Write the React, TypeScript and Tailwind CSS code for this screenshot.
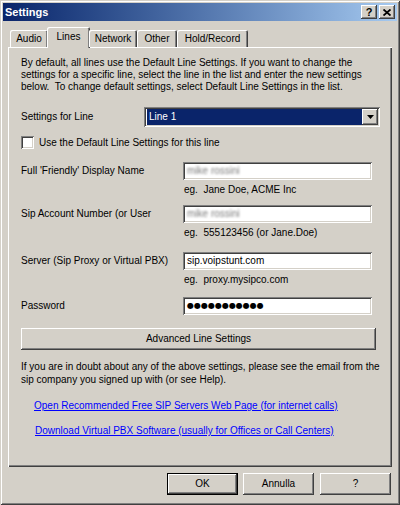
import React from "react";

const sunken =
  "bg-white shadow-[inset_1px_1px_#808080,inset_-1px_-1px_#ffffff,inset_2px_2px_#404040,inset_-2px_-2px_#d4d0c8]";
const raised =
  "bg-[#d4d0c8] shadow-[inset_-1px_-1px_#404040,inset_1px_1px_#ffffff,inset_-2px_-2px_#808080,inset_2px_2px_#d4d0c8]";

function Field({ children, className = "" }: { children: React.ReactNode; className?: string }) {
  return (
    <div className={`${sunken} h-[18px] w-[189px] flex items-center pl-[4px] text-black ${className}`}>
      {children}
    </div>
  );
}

function Blurred({ text }: { text: string }) {
  return <span className="text-[#7c7c7c] blur-[0.9px] select-none">{text}</span>;
}

function Row({ label, children, mt }: { label: string; children: React.ReactNode; mt: string }) {
  return (
    <div className={`flex items-center h-[18px] ${mt}`}>
      <div className="w-[162px] shrink-0">{label}</div>
      {children}
    </div>
  );
}

function Hint({ text, mt }: { text: string; mt: string }) {
  return <div className={`pl-[163px] h-[12px] leading-[12px] whitespace-pre ${mt}`}>{text}</div>;
}

export default function App() {
  const tabs = [
    { name: "Audio", w: "w-[38px]" },
    { name: "Lines", w: "w-[43px]", sel: true },
    { name: "Network", w: "w-[48px]" },
    { name: "Other", w: "w-[40px]" },
    { name: "Hold/Record", w: "w-[71px]" },
  ];
  return (
    <div
      className="w-[400px] h-[505px] bg-[#d4d0c8] p-[3px] flex flex-col text-[10px] leading-[12px] text-black shadow-[inset_1px_1px_#d4d0c8,inset_-1px_-1px_#404040,inset_2px_2px_#ffffff,inset_-2px_-2px_#808080]"
      style={{ fontFamily: '"Liberation Sans", Arial, sans-serif' }}
    >
      {/* Title bar */}
      <div className="h-[18px] flex items-center justify-between bg-gradient-to-r from-[#0a246a] to-[#a6caf0] pl-[2px] pr-[2px]">
        <span className="text-white font-bold text-[11px] leading-none">Settings</span>
        <div className="flex gap-[2px]">
          <div className={`${raised} w-[16px] h-[14px] flex items-center justify-center text-[11px] font-bold leading-none`}>
            ?
          </div>
          <div className={`${raised} w-[16px] h-[14px] flex items-center justify-center`}>
            <svg width="8" height="7" viewBox="0 0 8 7">
              <path d="M0.5 0.5 L7.5 6.5 M7.5 0.5 L0.5 6.5" stroke="#000" strokeWidth="1.8" />
            </svg>
          </div>
        </div>
      </div>

      {/* Tabs */}
      <div className="mt-[6px] ml-[7px] h-[20px] flex items-end relative z-10">
        {tabs.map((t) =>
          t.sel ? (
            <div
              key={t.name}
              className={`${t.w} h-[21px] mb-[-1px] -ml-[1px] -mr-[1px] bg-[#d4d0c8] rounded-t-[2px] shadow-[inset_1px_1px_#ffffff,inset_-1px_0_#404040,inset_-2px_0_#808080] flex items-start justify-center pt-[4px]`}
            >
              {t.name}
            </div>
          ) : (
            <div
              key={t.name}
              className={`${t.w} h-[17px] bg-[#d4d0c8] rounded-t-[2px] shadow-[inset_1px_1px_#ffffff,inset_-1px_0_#404040,inset_-2px_0_#808080] flex items-start justify-center pt-[3px]`}
            >
              {t.name}
            </div>
          )
        )}
      </div>

      {/* Panel */}
      <div className="ml-[5px] w-[384px] h-[420px] shadow-[inset_1px_1px_#ffffff,inset_-1px_-1px_#404040,inset_-2px_-2px_#808080] pl-[13px] pt-[10px] flex flex-col">
        <p className="w-[350px]">
          By default, all lines use the Default Line Settings. If you want to change the settings for a specific
          line, select the line in the list and enter the new settings below.&nbsp; To change default settings,
          select Default Line Settings in the list.
        </p>

        <div className="flex items-center h-[20px] mt-[14px]">
          <div className="w-[123px] shrink-0">Settings for Line</div>
          <div className={`${sunken} w-[236px] h-[20px] flex items-stretch p-[2px]`}>
            <div className="flex-1 bg-[#0a246a] text-white flex items-center pl-[2px] ml-[1px]">Line 1</div>
            <div className={`${raised} w-[16px] flex items-center justify-center`}>
              <svg width="7" height="4" viewBox="0 0 7 4">
                <path d="M0 0 H7 L3.5 4 Z" fill="#000" />
              </svg>
            </div>
          </div>
        </div>

        <div className="flex items-center h-[13px] mt-[9px]">
          <div className={`${sunken} w-[13px] h-[13px]`} />
          <span className="ml-[5px]">Use the Default Line Settings for this line</span>
        </div>

        <Row label="Full 'Friendly' Display Name" mt="mt-[13px]">
          <Field>
            <Blurred text="mike rossini" />
          </Field>
        </Row>
        <Hint text="eg.  Jane Doe, ACME Inc" mt="mt-[4px]" />

        <Row label="Sip Account Number (or User" mt="mt-[9px]">
          <Field>
            <Blurred text="mike rossini" />
          </Field>
        </Row>
        <Hint text="eg.  555123456 (or Jane.Doe)" mt="mt-[4px]" />

        <Row label="Server (Sip Proxy or Virtual PBX)" mt="mt-[13px]">
          <Field>sip.voipstunt.com</Field>
        </Row>
        <Hint text="eg.  proxy.mysipco.com" mt="mt-[4px]" />

        <Row label="Password" mt="mt-[11px]">
          <Field>
            <span className="text-[8px] leading-none" style={{ fontFamily: '"DejaVu Sans", sans-serif' }}>
              ●●●●●●●●●●●
            </span>
          </Field>
        </Row>

        <div className={`${raised} mt-[13px] w-[355px] h-[22px] flex items-center justify-center`}>
          Advanced Line Settings
        </div>

        <p className="mt-[10px] leading-[13px] w-[360px]">
          If you are in doubt about any of the above settings, please see the email from the sip company you signed
          up with (or see Help).
        </p>

        <a className="mt-[14px] ml-[13px] text-[#0000ff] underline underline-offset-[1px]">
          Open Recommended Free SIP Servers Web Page (for internet calls)
        </a>
        <a className="mt-[13px] ml-[14px] text-[#0000ff] underline underline-offset-[1px]">
          Download Virtual PBX Software (usually for Offices or Call Centers)
        </a>
      </div>

      {/* Bottom buttons */}
      <div className="mt-[6px] ml-[164px] flex">
        <div className="w-[71px] h-[22px] border border-black">
          <div className={`${raised} w-full h-full flex items-center justify-center`}>OK</div>
        </div>
        <div className={`${raised} ml-[5px] w-[71px] h-[22px] flex items-center justify-center`}>Annulla</div>
        <div className={`${raised} ml-[6px] w-[71px] h-[22px] flex items-center justify-center`}>?</div>
      </div>
    </div>
  );
}
